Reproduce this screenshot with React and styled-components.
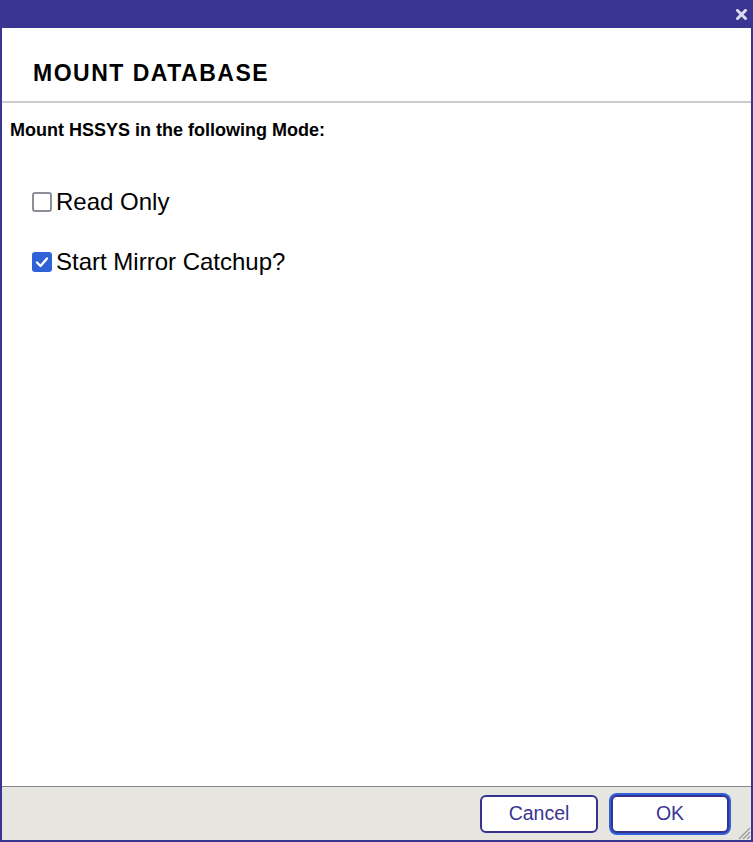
import React, { useState } from "react";
import styled, { createGlobalStyle } from "styled-components";

const GlobalStyle = createGlobalStyle`
  html, body {
    margin: 0;
    padding: 0;
    background: #ffffff;
  }
  body {
    font-family: "Liberation Sans", Arial, sans-serif;
  }
`;

const Window = styled.div`
  position: relative;
  box-sizing: border-box;
  width: 753px;
  height: 842px;
  display: flex;
  flex-direction: column;
  border: 2px solid #3a3592;
  border-top: none;
  background: #ffffff;
`;

const TitleBar = styled.div`
  height: 28px;
  margin: 0 -2px;
  background: #3a3592;
  display: flex;
  align-items: center;
  justify-content: flex-end;
  padding-right: 5px;
  flex-shrink: 0;
`;

const CloseButton = styled.button`
  width: 14px;
  height: 14px;
  padding: 0;
  border: none;
  background: transparent;
  cursor: pointer;
  display: flex;
  align-items: center;
  justify-content: center;
`;

const Header = styled.div`
  height: 75px;
  box-sizing: border-box;
  padding: 32px 0 0 31px;
  border-bottom: 2px solid #cccccc;
  flex-shrink: 0;
`;

const Title = styled.h1`
  margin: 0;
  font-size: 23px;
  line-height: 26px;
  font-weight: bold;
  letter-spacing: 1.5px;
  color: #000000;
`;

const Body = styled.div`
  flex: 1;
  padding: 16px 0 0 8px;
`;

const Prompt = styled.div`
  font-size: 18px;
  line-height: 22px;
  font-weight: bold;
  color: #000000;
  margin-bottom: 47px;
`;

const Options = styled.div`
  display: flex;
  flex-direction: column;
  gap: 32px;
  padding-left: 22px;
`;

const OptionRow = styled.label`
  display: flex;
  align-items: center;
  gap: 4px;
  height: 28px;
  font-size: 24px;
  color: #000000;
  cursor: pointer;
`;

const Box = styled.span`
  box-sizing: border-box;
  width: 20px;
  height: 20px;
  border-radius: 3px;
  border: 2px solid ${({ checked }) => (checked ? "#2f62d9" : "#8e8e99")};
  background: ${({ checked }) => (checked ? "#2f62d9" : "#ffffff")};
  display: flex;
  align-items: center;
  justify-content: center;
  flex-shrink: 0;
`;

const Footer = styled.div`
  height: 53px;
  flex-shrink: 0;
  background: #e6e5e0;
  border-top: 1px solid #888888;
  display: flex;
  align-items: center;
  justify-content: flex-end;
  gap: 13px;
  padding-right: 22px;
`;

const Button = styled.button`
  box-sizing: border-box;
  width: 118px;
  height: 38px;
  border: 2px solid #35338f;
  border-radius: 6px;
  background: #ffffff;
  color: #3a3592;
  font-family: "Liberation Sans", Arial, sans-serif;
  font-size: 19.5px;
  cursor: pointer;
  box-shadow: ${({ focused }) => (focused ? "0 0 0 2px #2f60d8" : "none")};
`;

const Grip = styled.svg`
  position: absolute;
  right: 0;
  bottom: 0;
`;

const Checkbox = ({ checked, onToggle, children }) => (
  <OptionRow onClick={onToggle}>
    <Box checked={checked}>
      {checked && (
        <svg width="14" height="12" viewBox="0 0 14 12">
          <path d="M2 6.5 L5.5 10 L12 2.5" fill="none" stroke="#ffffff" strokeWidth="2.4" strokeLinecap="round" strokeLinejoin="round" />
        </svg>
      )}
    </Box>
    <span>{children}</span>
  </OptionRow>
);

export default function App() {
  const [readOnly, setReadOnly] = useState(false);
  const [catchup, setCatchup] = useState(true);

  return (
    <>
      <GlobalStyle />
      <Window>
        <TitleBar>
          <CloseButton aria-label="Close">
            <svg width="11" height="11" viewBox="0 0 11 11">
              <path d="M1.5 1.5 L9.5 9.5 M9.5 1.5 L1.5 9.5" stroke="#dcdcea" strokeWidth="3" strokeLinecap="square" />
            </svg>
          </CloseButton>
        </TitleBar>
        <Header>
          <Title>MOUNT DATABASE</Title>
        </Header>
        <Body>
          <Prompt>Mount HSSYS in the following Mode:</Prompt>
          <Options>
            <Checkbox checked={readOnly} onToggle={() => setReadOnly(!readOnly)}>
              Read Only
            </Checkbox>
            <Checkbox checked={catchup} onToggle={() => setCatchup(!catchup)}>
              Start Mirror Catchup?
            </Checkbox>
          </Options>
        </Body>
        <Footer>
          <Button>Cancel</Button>
          <Button focused>OK</Button>
        </Footer>
        <Grip width="16" height="16" viewBox="0 0 16 16">
          <path d="M15 4 L4 15 M15 8 L8 15 M15 12 L12 15" stroke="#9a9a9a" strokeWidth="1.3" />
        </Grip>
      </Window>
    </>
  );
}
